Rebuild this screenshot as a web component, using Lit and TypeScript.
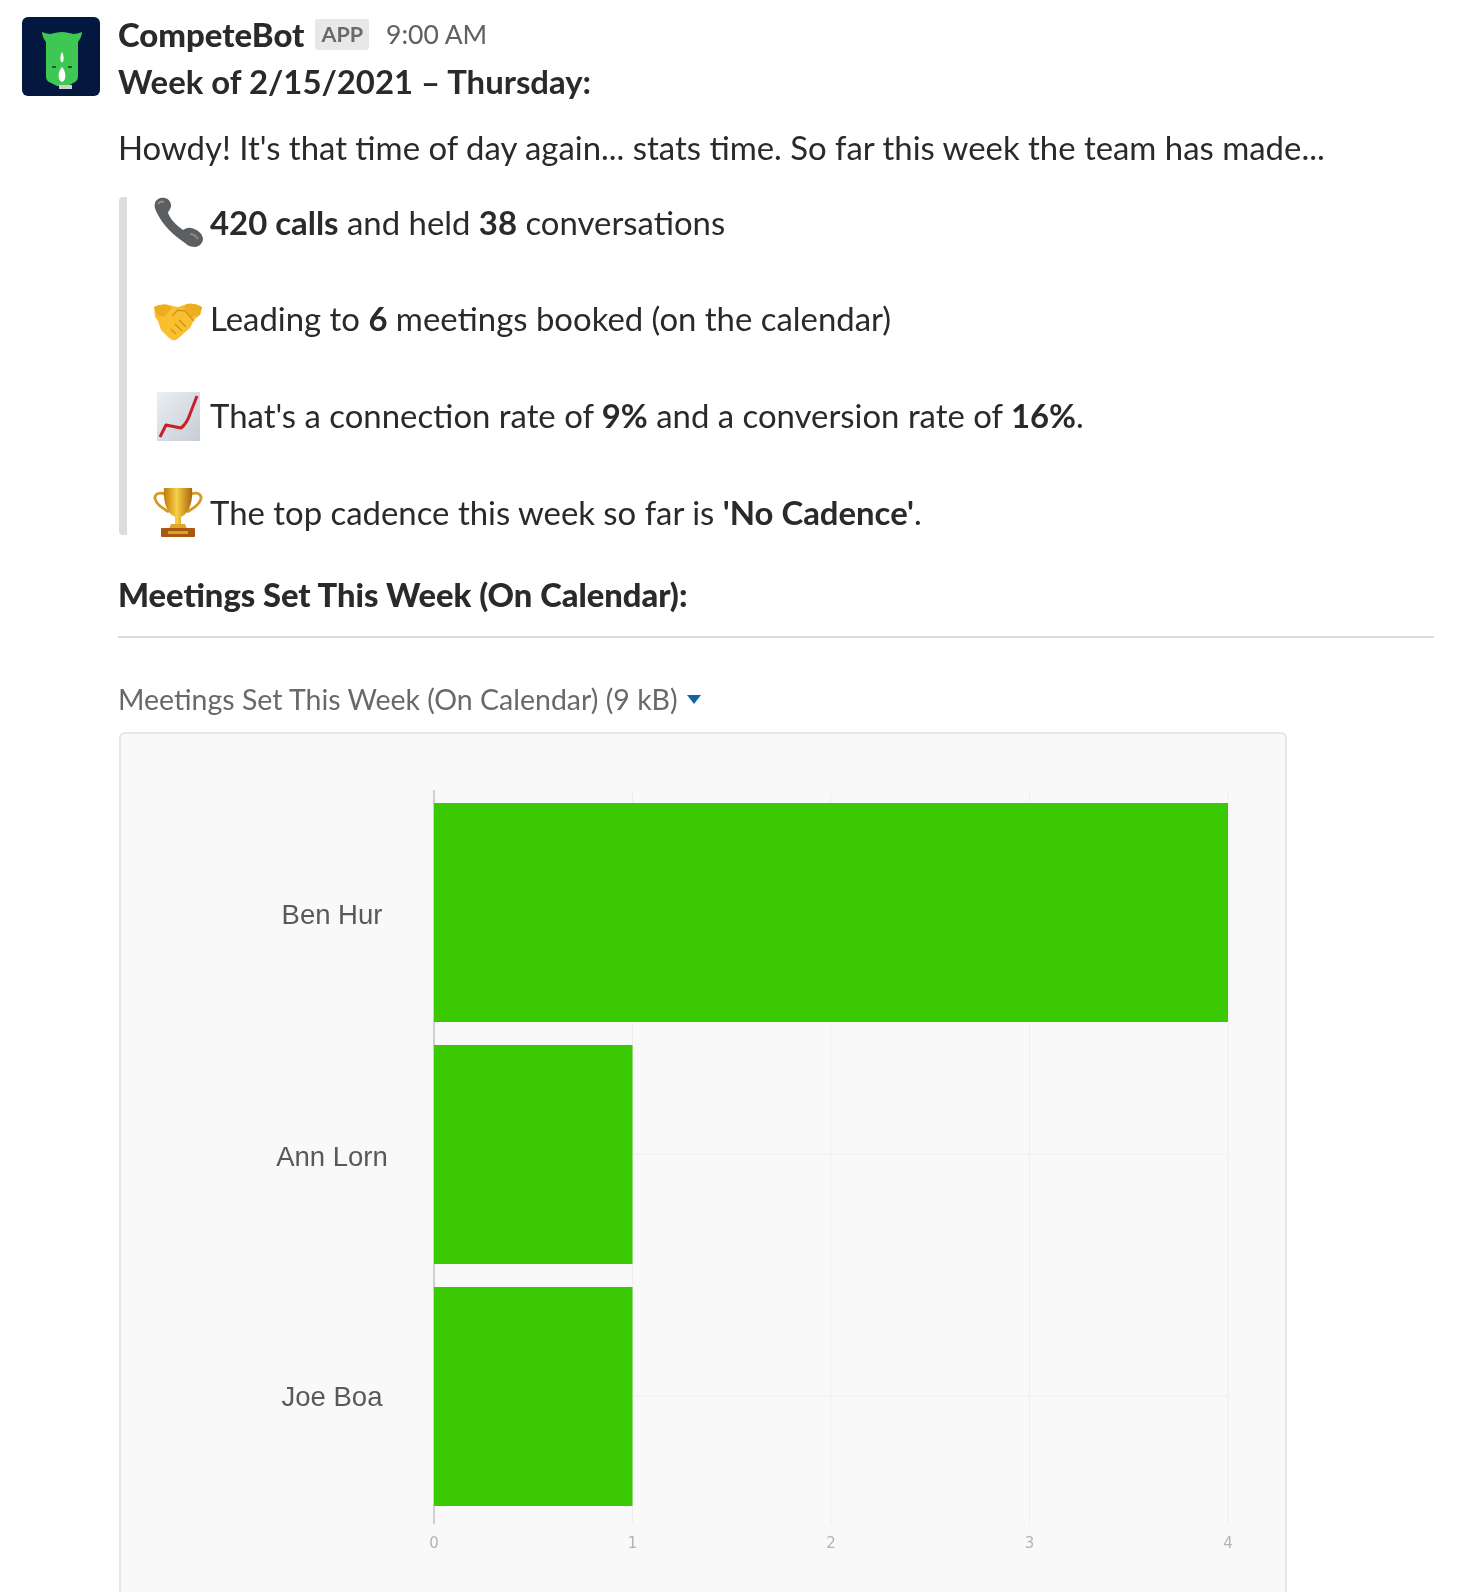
import { LitElement, html, css, svg } from "lit";
import { customElement } from "lit/decorators.js";

const AXIS_X = 314;
const UNIT = 198.5;
const bars = [
  { name: "Ben Hur", value: 4, top: 69, labelX: 212, labelY: 190 },
  { name: "Ann Lorn", value: 1, top: 311, labelX: 212, labelY: 432 },
  { name: "Joe Boa", value: 1, top: 553, labelX: 212, labelY: 672 },
];

const phone = html`<svg class="emoji" viewBox="0 0 50 50"><path d="M2 6c1-4 6-6 10-5 4 1 6 4 6 8 0 3-3 5-3 7 3 7 8 12 15 17 2-1 5-3 8-2 6 1 12 6 12 11 0 4-4 8-8 8-3 0-7-1-10-4C20 38 9 27 4 16 2 12 1 9 2 6z" fill="#5c5f61"/><path d="M5 7c1-2 4-3 6-2" stroke="#8d9092" stroke-width="2" fill="none"/><path d="M37 37c3 0 6 2 8 5" stroke="#85888a" stroke-width="2" fill="none"/></svg>`;
const hands = html`<svg class="emoji" viewBox="0 0 50 50"><path d="M1 13c4-2 9-3 14-2l10 2 9-3c5-1 10 0 15 3l-2 8-6 5-4 8-8 7-6 5c-3 1-6-1-8-3l-7-7-3-9-3-4z" fill="#f8c02e"/><path d="M1 13c4-2 9-3 14-2l4 3-8 9-6-1zM49 13c-5-3-10-4-15-3l-4 3 9 10 8-2z" fill="#eeac20"/><path d="M19 22l6-6 7 1 9 10M26 26l7 7M22 30l7 7M18 35l5 5" stroke="#d8931a" stroke-width="1.5" fill="none"/></svg>`;
const chart = html`<svg class="emoji" viewBox="0 0 50 50"><defs><linearGradient id="cg" x1="0" y1="0" x2="1" y2="1"><stop offset="0" stop-color="#e9edf4"/><stop offset="1" stop-color="#c8cdd5"/></linearGradient></defs><rect x="4" y="1" width="43" height="49" fill="url(#cg)"/><path d="M7 46l6-12 15 3c4-3 7-8 9-14l7-18" fill="none" stroke="#c8202a" stroke-width="3" stroke-linejoin="round"/></svg>`;
const trophy = html`<svg class="emoji" viewBox="0 0 50 50"><defs><linearGradient id="tg" x1="0" x2="1" y1="0" y2="0"><stop offset="0" stop-color="#c07a0d"/><stop offset=".45" stop-color="#f7cf46"/><stop offset="1" stop-color="#a9660a"/></linearGradient></defs><path d="M12 7C4 4 0 9 3 14c2 5 8 8 13 11M38 7c8-3 12 2 9 7-2 5-8 8-13 11" fill="none" stroke="#d49a24" stroke-width="2.8"/><path d="M11 1h28c1 12-2 25-11 29v8h-6v-8C13 26 10 13 11 1z" fill="url(#tg)"/><path d="M18 37h14l2 5H16z" fill="#dca72c"/><rect x="8" y="41" width="34" height="9" rx="1" fill="#a8590f"/><rect x="15" y="44" width="20" height="3" fill="#d9a128"/></svg>`;

@customElement("app-root")
export class AppRoot extends LitElement {
  static styles = css`
    :host {
      display: block;
      height: 1592px;
      overflow: hidden;
      background: #fff;
      font-family: Lato, "Open Sans", sans-serif;
      color: #2a2a2b;
    }
    .message {
      display: grid;
      grid-template-columns: 78px 1fr;
      column-gap: 18px;
      padding: 17px 44px 0 22px;
      filter: blur(0.7px);
    }
    .avatar {
      width: 78px;
      height: 79px;
      border-radius: 6px;
      background: #03173f;
      display: block;
    }
    .head {
      display: flex;
      align-items: center;
      height: 34px;
    }
    .name {
      font-size: 32.9px;
      font-weight: 900;
    }
    .badge {
      margin-left: 11px;
      background: #e8e8e8;
      color: #696969;
      font-size: 21.5px;
      font-weight: 700;
      line-height: 31px;
      padding: 0 6px;
      border-radius: 3px;
    }
    .time {
      margin-left: 17px;
      font-size: 26.5px;
      color: #616061;
    }
    .line {
      font-size: 32.9px;
      line-height: 40px;
    }
    .title { font-weight: 700; margin-top: 11px; }
    .intro { margin-top: 26px; }
    .quote {
      margin-top: 29px;
      margin-left: 1px;
      border-left: 8px solid #dddddd;
      border-radius: 4px;
      padding-left: 25px;
      display: flex;
      flex-direction: column;
      gap: 56.8px;
      height: 338px;
      box-sizing: border-box;
    }
    .row {
      display: flex;
      align-items: center;
      gap: 7px;
      height: 40px;
      font-size: 32.9px;
      white-space: nowrap;
    }
    .row:first-child { margin-top: 5px; }
    .emoji { width: 50px; height: 50px; flex: none; margin-left: 1px; }
    b { font-weight: 700; }
    .heading { margin-top: 40px; font-weight: 900; font-size: 32.7px; }
    hr {
      border: 0;
      border-top: 2px solid #dcdcdc;
      margin: 21px 0 0;
    }
    .caption {
      margin-top: 43px;
      display: flex;
      align-items: center;
      gap: 9px;
      color: #696969;
      font-size: 28.5px;
      line-height: 36px;
    }
    .caret { width: 14px; height: 9px; flex: none; }
    .card {
      margin-top: 15px;
      margin-left: 1px;
      width: 1168px;
      height: 1000px;
      box-sizing: border-box;
      background: #f9f9f9;
      border: 2px solid #e6e6e6;
      border-radius: 6px;
    }
    .plot { display: block; width: 1164px; height: 996px; margin-left: -1px; }
    .cat { font: 27.5px "Liberation Sans", Arial, sans-serif; fill: #595959; text-anchor: middle; }
    .tick { font: 15px "DejaVu Sans", sans-serif; fill: #b4b4b4; text-anchor: middle; }
  `;

  render() {
    const ticks = [0, 1, 2, 3, 4];
    return html`
      <div class="message">
        <svg class="avatar" viewBox="0 0 78 79">
          <path d="M24 25c-2-3-4-6-4-10 3 1 6 2 9 2 3-1 7-2 11-2s8 1 11 2c3 0 6-1 9-2 0 4-2 7-4 10v34c0 3-1 5-3 6l-7 4H35l-8-4c-2-1-3-3-3-6z" fill="#3fc754"/>
          <path d="M40 35c2 3 2 7 1 10h-2c-1-3-1-7 1-10zM40 50c4 4 5 13 0 15-5-2-4-11 0-15z" fill="#fff"/>
          <path d="M30 50h4M46 50h4" stroke="#0f3b2a" stroke-width="1.6"/>
          <path d="M37 68h13v4h-13z" fill="#c9d3cc"/>
        </svg>
        <div>
          <div class="head">
            <span class="name">CompeteBot</span>
            <span class="badge">APP</span>
            <span class="time">9:00 AM</span>
          </div>
          <div class="line title">Week of 2/15/2021 – Thursday:</div>
          <div class="line intro">Howdy! It's that time of day again... stats time. So far this week the team has made...</div>
          <div class="quote">
            <div class="row">${phone}<span><b>420 calls</b> and held <b>38</b> conversations</span></div>
            <div class="row">${hands}<span>Leading to <b>6</b> meetings booked (on the calendar)</span></div>
            <div class="row">${chart}<span>That's a connection rate of <b>9%</b> and a conversion rate of <b>16%</b>.</span></div>
            <div class="row">${trophy}<span>The top cadence this week so far is <b>'No Cadence'</b>.</span></div>
          </div>
          <div class="line heading">Meetings Set This Week (On Calendar):</div>
          <hr />
          <div class="caption">
            <span>Meetings Set This Week (On Calendar) (9 kB)</span>
            <svg class="caret" viewBox="0 0 14 9"><path d="M0 0h14L7 9z" fill="#1264a3"/></svg>
          </div>
          <div class="card">
            <svg class="plot" viewBox="0 0 1164 996">
              ${ticks.slice(1).map(
                (t) => svg`<line x1=${AXIS_X + t * UNIT} x2=${AXIS_X + t * UNIT} y1="56" y2="790" stroke="#efefef" />`
              )}
              ${bars.map(
                (b) => svg`<line x1=${AXIS_X} x2=${AXIS_X + 4 * UNIT} y1=${b.top + 109} y2=${b.top + 109} stroke="#efefef" />`
              )}
              <line x1=${AXIS_X} x2=${AXIS_X} y1="56" y2="790" stroke="#cfcfcf" stroke-width="2" />
              ${bars.map(
                (b) => svg`
                  <rect x=${AXIS_X} y=${b.top} width=${b.value * UNIT} height="219" fill="#3bc904" />
                  <text class="cat" x=${b.labelX} y=${b.labelY}>${b.name}</text>
                `
              )}
              ${ticks.map(
                (t) => svg`<text class="tick" x=${AXIS_X + t * UNIT} y="814">${t}</text>`
              )}
            </svg>
          </div>
        </div>
      </div>
    `;
  }
}
